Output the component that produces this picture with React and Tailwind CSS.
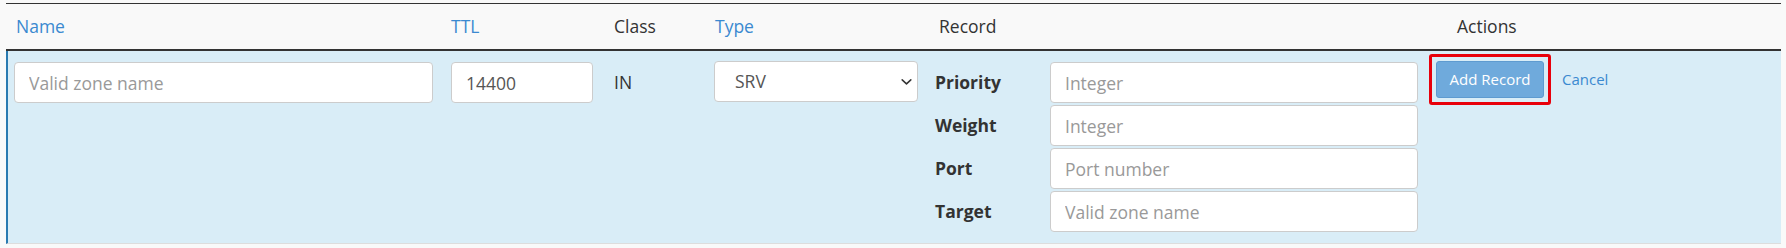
import React from 'react';

const inputCls =
  "h-[41px] rounded-[4px] border border-[#ccc] bg-white px-[14px] text-[17.5px] text-[#555] placeholder:text-[#999] outline-none";

const recordFields = [
  { label: 'Priority', placeholder: 'Integer' },
  { label: 'Weight', placeholder: 'Integer' },
  { label: 'Port', placeholder: 'Port number' },
  { label: 'Target', placeholder: 'Valid zone name' },
];

const App = () => {
  return (
    <div className="min-h-screen bg-[#f9f9f9] pt-[3px] font-['Open_Sans','Liberation_Sans',sans-serif]">
      <div className="ml-[6px] w-[1775px]">
        {/* header */}
        <div className="flex h-[48px] items-center border-t border-b-2 border-[#333] text-[17.5px] text-[#333]">
          <div className="w-[437px] pl-[10px] text-[#3b89d0]">Name</div>
          <div className="w-[162px] pl-[8px] text-[#3b89d0]">TTL</div>
          <div className="w-[101px] pl-[9px]">Class</div>
          <div className="w-[221px] pl-[9px] text-[#3b89d0]">Type</div>
          <div className="w-[499px] pl-[12px]">Record</div>
          <div className="flex-1 pl-[31px]">Actions</div>
        </div>

        {/* edit row */}
        <div className="flex h-[193px] items-start border-b border-l-2 border-b-[#ddd] border-l-[#2a7ab0] bg-[#d9edf7] text-[17.5px] text-[#333]">
          <div className="w-[435px] pl-[6px] pt-[11px]">
            <input className={`${inputCls} w-[419px]`} placeholder="Valid zone name" />
          </div>
          <div className="w-[162px] pl-[8px] pt-[11px]">
            <input className={`${inputCls} w-[142px]`} defaultValue="14400" />
          </div>
          <div className="w-[101px] pl-[9px] pt-[11px]">
            <span className="flex h-[41px] items-center">IN</span>
          </div>
          <div className="w-[221px] pl-[8px] pt-[10px]">
            <div className="flex h-[41px] w-[204px] items-center justify-between rounded-[4px] border border-[#ccc] bg-white pl-[20px] pr-[4px] text-[#555]">
              <span>SRV</span>
              <svg width="13" height="13" viewBox="0 0 12 12" fill="none" stroke="#333" strokeWidth="1.4" strokeLinecap="round" strokeLinejoin="round">
                <path d="M2 4.5 L6 8.2 L10 4.5" />
              </svg>
            </div>
          </div>
          <div className="flex w-[499px] flex-col gap-[2px] pl-[8px] pt-[11px]">
            {recordFields.map((f) => (
              <div key={f.label} className="flex items-center">
                <span className="w-[115px] font-bold">{f.label}</span>
                <input className={`${inputCls} w-[368px]`} placeholder={f.placeholder} />
              </div>
            ))}
          </div>
          <div className="flex flex-1 items-center pl-[3px] pt-[3px]">
            <div className="rounded-[3px] border-[3px] border-[#e8000b] p-[4px]">
              <button className="h-[37px] w-[108px] rounded-[3px] border border-[#5e9bd0] bg-[#6faadc] text-[15px] text-white">
                Add Record
              </button>
            </div>
            <a className="ml-[11px] text-[15px] text-[#3b89d0]">Cancel</a>
          </div>
        </div>
      </div>
    </div>
  );
};

export default App;
